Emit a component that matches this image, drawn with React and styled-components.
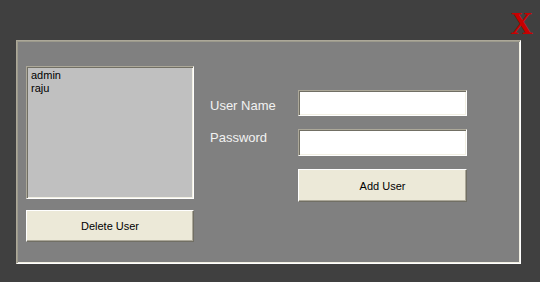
import styled, { createGlobalStyle } from "styled-components";

const GlobalStyle = createGlobalStyle`
  html, body {
    margin: 0;
    padding: 0;
    background: #404040;
  }
  body {
    font-family: "Liberation Sans", Arial, sans-serif;
  }
`;

const Screen = styled.div`
  width: 540px;
  height: 282px;
  background: #404040;
  display: flex;
  flex-direction: column;
  box-sizing: border-box;
  overflow: hidden;
`;

const TopBar = styled.div`
  height: 40px;
  display: flex;
  justify-content: flex-end;
  align-items: flex-start;
  padding-right: 7px;
  box-sizing: border-box;
`;

const CloseX = styled.span`
  font-family: "Liberation Serif", "Times New Roman", serif;
  font-weight: bold;
  font-size: 31px;
  line-height: 31px;
  color: #c80000;
  margin-top: 8px;
  cursor: pointer;
`;

const Panel = styled.div`
  margin: 0 19px 0 16px;
  height: 224px;
  box-sizing: border-box;
  background: #808080;
  border-top: 1px solid #aca899;
  border-left: 1px solid #aca899;
  border-right: 1px solid #ffffff;
  border-bottom: 1px solid #ffffff;
  box-shadow: inset 1px 1px 0 #9c9a8c, inset -1px -1px 0 #f1efe2;
  display: flex;
  align-items: flex-start;
  padding: 25px 0 0 9px;
`;

const LeftColumn = styled.div`
  display: flex;
  flex-direction: column;
  gap: 11px;
  width: 168px;
`;

const ListBox = styled.div`
  height: 133px;
  box-sizing: border-box;
  background: #c0c0c0;
  border-top: 1px solid #aca899;
  border-left: 1px solid #aca899;
  border-right: 1px solid #ffffff;
  border-bottom: 1px solid #ffffff;
  box-shadow: inset 1px 1px 0 #716f64, inset -1px -1px 0 #f1efe2;
  padding: 2px 4px;
`;

const ListItem = styled.div`
  font-size: 11px;
  line-height: 13px;
  color: #000000;
`;

const Button = styled.button`
  width: ${({ $width }) => $width || "168px"};
  height: ${({ $height }) => $height || "32px"};
  box-sizing: border-box;
  background: #ece9d8;
  border-top: 1px solid #ffffff;
  border-left: 1px solid #ffffff;
  border-right: 1px solid #716f64;
  border-bottom: 1px solid #716f64;
  box-shadow: inset -1px -1px 0 #aca899;
  font-family: "Liberation Sans", Arial, sans-serif;
  font-size: 11px;
  color: #000000;
  padding: 0;
  cursor: pointer;
`;

const Form = styled.div`
  margin: 24px 0 0 16px;
  display: grid;
  grid-template-columns: 88px 169px;
  grid-auto-rows: auto;
  row-gap: 13px;
`;

const Label = styled.label`
  font-size: 13px;
  line-height: 15px;
  color: #f2f2f2;
  padding-top: ${({ $offset }) => $offset || 0}px;
`;

const TextInput = styled.input`
  width: 169px;
  height: ${({ $height }) => $height || "26px"};
  box-sizing: border-box;
  background: #ffffff;
  border-top: 1px solid #aca899;
  border-left: 1px solid #aca899;
  border-right: 1px solid #ffffff;
  border-bottom: 1px solid #ffffff;
  box-shadow: inset 1px 1px 0 #716f64, inset -1px -1px 0 #f1efe2;
  outline: none;
  padding: 0 3px;
  font-family: "Liberation Sans", Arial, sans-serif;
  font-size: 12px;
`;

const Spacer = styled.div``;

export default function App() {
  const users = ["admin", "raju"];
  return (
    <>
      <GlobalStyle />
      <Screen>
        <TopBar>
          <CloseX>X</CloseX>
        </TopBar>
        <Panel>
          <LeftColumn>
            <ListBox>
              {users.map((u) => (
                <ListItem key={u}>{u}</ListItem>
              ))}
            </ListBox>
            <Button>Delete User</Button>
          </LeftColumn>
          <Form>
            <Label $offset={8}>User Name</Label>
            <TextInput type="text" />
            <Label $offset={1}>Password</Label>
            <TextInput type="password" $height="27px" />
            <Spacer />
            <Button $width="169px" $height="33px">
              Add User
            </Button>
          </Form>
        </Panel>
      </Screen>
    </>
  );
}
